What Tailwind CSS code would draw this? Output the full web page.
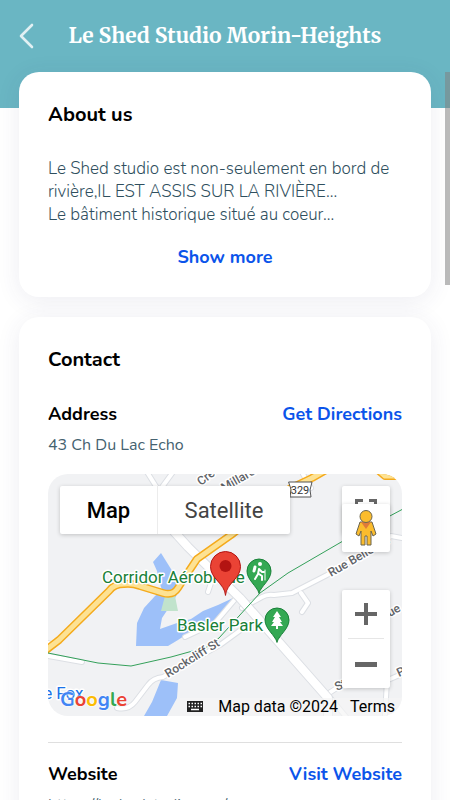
<!DOCTYPE html>
<html lang="en">
<head>
    <meta charset="UTF-8">
    <meta name="viewport" content="width=device-width, initial-scale=1.0">
    <title>Le Shed Studio Morin-Heights</title>
    <script src="https://cdn.jsdelivr.net/npm/@tailwindcss/browser@4"></script>
</head>
<body class="relative h-screen overflow-hidden bg-white font-[Nunito,Lato,sans-serif] text-black">
    <header class="flex h-27 items-start bg-[#6ab6c3] px-4">
        <button type="button" aria-label="Back" class="flex h-18 w-8 items-center text-white/80">
            <svg class="h-7 w-5" viewBox="0 0 20 28" fill="none" stroke="currentColor" stroke-width="2.6" stroke-linecap="round" stroke-linejoin="round">
                <path d="M16 3 5 14l11 11"/>
            </svg>
        </button>
        <h1 class="flex h-18 flex-1 items-center justify-center pr-8 font-[Merriweather,'Liberation_Serif',serif] text-[21px] font-bold text-white">Le Shed Studio Morin-Heights</h1>
    </header>

    <main class="-mt-9 flex flex-col gap-5 px-[19px]">
        <section class="flex flex-col rounded-[20px] bg-white px-[29px] pt-[29px] pb-[26px] shadow-[0_4px_24px_rgba(60,60,110,0.09)]">
            <h2 class="text-xl leading-7 font-bold">About us</h2>
            <p class="mt-7 text-[17px] leading-[23px] font-light text-[#2f4f5e]">
                Le Shed studio est non-seulement en bord de rivière,IL EST ASSIS SUR LA RIVIÈRE...<br>
                Le bâtiment historique situé au coeur...
            </p>
            <button type="button" class="mt-[17px] self-center text-lg leading-7 font-bold text-[#0b54ea]">Show more</button>
        </section>

        <section class="rounded-[20px] bg-white px-[29px] pt-[29px] pb-[26px] shadow-[0_4px_24px_rgba(60,60,110,0.09)]">
            <h2 class="text-xl leading-7 font-bold">Contact</h2>

            <div class="mt-7 flex items-center justify-between text-lg leading-6 font-bold">
                <h3>Address</h3>
                <a href="#directions" class="text-[#0b54ea]">Get Directions</a>
            </div>
            <p class="mt-[9px] text-base leading-5 text-[#456270]">43 Ch Du Lac Echo</p>

            <!-- Map -->
            <div class="relative mt-[19px] h-[242px] overflow-hidden rounded-[20px] bg-[#f1f2f4] font-[Roboto,sans-serif]">
                <svg class="h-full w-full" viewBox="48 474 354 242" preserveAspectRatio="xMidYMid slice" fill="none" stroke-linejoin="round" stroke-linecap="round">
                    <!-- water and park -->
                    <path fill="#9dc0f9" d="M161 553l-8 9 4 9 2 10 3 9-7 6-11 12-7 15-1 23h32l10-6 12-8 17-6 12-8 6-8 8-12-15 7-15 6-12 8-14 4-17 6 2-11 8-12 5-8 5-9-1-8-3-4z"/>
                    <path fill="#9dc0f9" d="M161 680l17 3-1 15-10 18h-23l8-14z"/>
                    <path fill="#c1e3cc" d="M165 596h10l3 15h-17z"/>
                    <!-- minor roads -->
                    <g stroke="#dcdfe4" stroke-width="6">
                        <path d="M147 472l10 16M173 472l-16 22M208 592l5-15M48 643l6 2M48 656l34 6"/>
                        <path d="M117 708c9 2 14-1 18-6l13-17q5-7 15-8l57-32 22-16M185 637l30-14 22-26"/>
                        <path d="M242 608l20-11q5-3 12-2l18-2 35-18 50-30 14-9 11 2M301 593l7 10-6 9"/>
                        <path d="M329 693l14-9M387 680l-2 36M388 680l16-7M303 474l8 14M327 694l20 24"/>
                    </g>
                    <g stroke="#fff" stroke-width="4">
                        <path d="M147 472l10 16M173 472l-16 22M208 592l5-15M48 643l6 2M48 656l34 6"/>
                        <path d="M117 708c9 2 14-1 18-6l13-17q5-7 15-8l57-32 22-16M185 637l30-14 22-26"/>
                        <path d="M242 608l20-11q5-3 12-2l18-2 35-18 50-30 14-9 11 2M301 593l7 10-6 9"/>
                        <path d="M329 693l14-9M387 680l-2 36M388 680l16-7M303 474l8 14M327 694l20 24"/>
                    </g>
                    <path stroke="#dcdfe4" stroke-width="10" d="M150 505l38 42 52 51 88 100v18"/>
                    <path stroke="#fff" stroke-width="8" d="M150 505l38 42 52 51 88 100v18"/>
                    <!-- highway -->
                    <path stroke="#f4aa1c" stroke-width="8" d="M46 650l13-10 50-49q5-7 15-7 8-1 16 2l23 7q10 3 15-5l7-11 12-18 34-24 60-47 21-10 28-16M378 470l7 6h12"/>
                    <path stroke="#fde293" stroke-width="5" d="M46 650l13-10 50-49q5-7 15-7 8-1 16 2l23 7q10 3 15-5l7-11 12-18 34-24 60-47 21-10 28-16M378 470l7 6h12"/>
                    <!-- trail -->
                    <path stroke="#34a05a" d="M48 653l50 10 33 3 40-9 36-10 12-9 41-45 28-20 55-32 60-32"/>
                    <!-- street names -->
                    <g fill="#5f6368" stroke="#fff" stroke-width="3" paint-order="stroke" font-size="12" font-weight="500">
                        <text transform="translate(168 678) rotate(-32)">Rockcliff St</text>
                        <text transform="translate(331 577) rotate(-30)">Rue Bellevue</text>
                        <text transform="translate(201 486) rotate(-38)">Cre</text>
                        <text transform="translate(224 492) rotate(-30)">Millard</text>
                        <text transform="translate(337 691) rotate(-25)">St</text>
                        <text transform="translate(390 617) rotate(-30)">ue</text>
                        <text transform="translate(399 677) rotate(-25)">P</text>
                    </g>
                    <g fill="#188038" stroke="#fff" stroke-width="3" paint-order="stroke" font-size="17">
                        <text x="102" y="583">Corridor Aérobique</text>
                        <text x="177" y="631">Basler Park</text>
                    </g>
                    <text x="39" y="699" fill="#1a73e8" stroke="#fff" stroke-width="3" paint-order="stroke" font-size="17">le Fox</text>
                    <!-- route shield -->
                    <path fill="#fff" stroke="#555" d="M289 482h23l-2 8 1 7h-21l1-7z"/>
                    <text x="300" y="494" fill="#333" font-size="11" text-anchor="middle">329</text>
                    <!-- place pins -->
                    <g fill="#34a853" stroke="#188038">
                        <path d="M259 593c-2-7-12-13-12-22a12 12 0 0 1 24 0c0 9-10 15-12 22z"/>
                        <path d="M277 642c-2-7-12-13-12-22a12 12 0 0 1 24 0c0 9-10 15-12 22z"/>
                    </g>
                    <circle cx="260" cy="564" r="2" fill="#fff"/>
                    <path stroke="#fff" stroke-width="2" d="M259 569l-1 5-3 5M259 574l3 2v4M259 569l3 3h2"/>
                    <path stroke="#fff" stroke-width="3" d="M255 567l-1 4"/>
                    <path stroke="#fff" d="M265 570v10"/>
                    <path fill="#fff" d="M277 611l4 6h-2l3 5h-2l3 4h-5v3h-2v-3h-5l3-4h-2l3-5h-2z"/>
                    <!-- location pin -->
                    <path fill="#ea4335" stroke="#b31412" d="M225.500 595c-1-12-15-16-15-28.500a15 15 0 0 1 30 0c0 12.500-14 16.500-15 28.500z"/>
                    <circle cx="225.500" cy="566" r="6" fill="#b31412"/>
                </svg>

                <div class="absolute top-3 left-3 flex h-12 rounded-xs bg-white text-[22px] shadow-[0_1px_4px_rgba(0,0,0,0.2)]">
                    <button type="button" class="w-[98px] border-r border-[#ececec] font-medium">Map</button>
                    <button type="button" class="w-33 text-[#444]">Satellite</button>
                </div>

                <button type="button" aria-label="Toggle fullscreen view" class="absolute top-3 right-3 flex size-12 items-center justify-center rounded-xs bg-white shadow-[0_1px_4px_rgba(0,0,0,0.2)]">
                    <svg class="size-[22px]" viewBox="0 0 22 22" fill="none" stroke="#666" stroke-width="3">
                        <path d="M1.500 8V1.500H8M14 1.500h6.500V8M20.500 14v6.500H14M8 20.500H1.500V14"/>
                    </svg>
                </button>
                <button type="button" aria-label="Street View" class="absolute top-[30px] right-3 flex size-12 items-center justify-center rounded-xs bg-white shadow-[0_1px_4px_rgba(0,0,0,0.2)]">
                    <svg class="h-[38px] w-6" viewBox="0 0 24 38" fill="#fbbc2d" stroke="#6b654f" stroke-linejoin="round">
                        <path d="M6 13h12l4 12-3 2-2-5v14h-4V27h-2v9H7V22l-2 5-3-2z"/>
                        <path fill="#de7b3a" stroke="none" d="M7 13h10l-5 7z"/>
                        <circle cx="12" cy="7.500" r="6"/>
                    </svg>
                </button>

                <div class="absolute right-3 bottom-7 flex w-12 flex-col rounded-xs bg-white px-1.5 shadow-[0_1px_4px_rgba(0,0,0,0.2)]">
                    <button type="button" aria-label="Zoom in" class="flex h-[49px] items-center justify-center border-b border-[#e6e6e6]">
                        <svg class="size-[22px]" viewBox="0 0 22 22" fill="#666"><path d="M9 0h4v9h9v4h-9v9H9v-9H0V9h9z"/></svg>
                    </button>
                    <button type="button" aria-label="Zoom out" class="flex h-[49px] items-center justify-center">
                        <svg class="size-[22px]" viewBox="0 0 22 22" fill="#666"><path d="M0 9h22v5H0z"/></svg>
                    </button>
                </div>

                <a href="#google" class="absolute bottom-0.5 left-3 font-[Nunito,Lato,sans-serif] text-xl leading-7 font-bold [text-shadow:0_0_2px_#fff,0_0_2px_#fff]"><span class="text-[#4285f4]">G</span><span class="text-[#ea4335]">o</span><span class="text-[#fbbc04]">o</span><span class="text-[#4285f4]">g</span><span class="text-[#34a853]">l</span><span class="text-[#ea4335]">e</span></a>

                <div class="absolute right-0 bottom-0 flex h-[18px] items-center bg-[#f5f5f5]/70 pr-[7px] pl-1.5 text-base leading-[18px]">
                    <button type="button" aria-label="Keyboard shortcuts" class="mr-3.5">
                        <svg class="h-3 w-[18px]" viewBox="0 0 18 12">
                            <path fill="#222" d="M1 0h16v11H1z"/>
                            <path stroke="#fff" stroke-width="1.500" stroke-dasharray="1.500 1.500" d="M2.500 2.500h14M2.500 5.500h14"/>
                            <path stroke="#fff" stroke-width="1.500" d="M5 8.500h8"/>
                        </svg>
                    </button>
                    <span class="mr-3">Map data ©2024</span>
                    <a href="#terms">Terms</a>
                </div>
            </div>

            <hr class="mt-[26px] border-[#dfdfdf]">

            <div class="mt-[19px] flex items-center justify-between text-lg leading-6 font-bold">
                <h3>Website</h3>
                <a href="#website" class="text-[#0b54ea]">Visit Website</a>
            </div>
            <p class="mt-[9px] text-base leading-5 text-[#456270]">https://leshedstudio.com/</p>
        </section>
    </main>

    <!-- scroll thumb -->
    <div class="absolute top-18 right-0 h-[213px] w-[5px] bg-[#828282]/55"></div>
</body>
</html>
